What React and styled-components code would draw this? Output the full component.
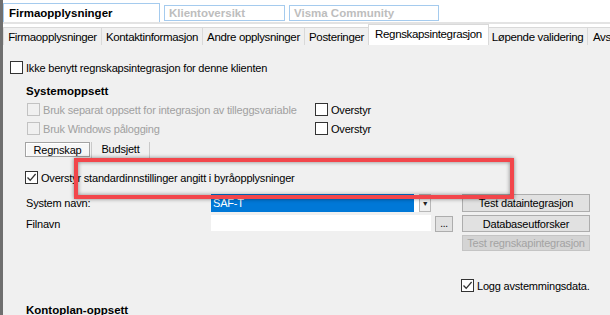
import React from "react";
import styled, { createGlobalStyle } from "styled-components";

const GlobalStyle = createGlobalStyle`
  html, body {
    margin: 0;
    padding: 0;
    width: 610px;
    height: 315px;
    overflow: hidden;
    background: #f0f0f0;
  }
  * {
    box-sizing: border-box;
  }
`;

const FONT = `"Liberation Sans", Arial, sans-serif`;

const Frame = styled.div`
  position: relative;
  width: 610px;
  height: 315px;
  overflow: hidden;
  border-left: 3px solid #6f6f6f;
  font-family: ${FONT};
  font-size: 11px;
  letter-spacing: -0.2px;
  color: #000;
  display: flex;
  flex-direction: column;
  background: #f0f0f0;
`;

const TopBar = styled.div`
  height: 22px;
  background: #fff;
  display: flex;
  align-items: flex-end;
  gap: 4px;
  flex-shrink: 0;
`;

const TopTab = styled.div`
  width: ${(p) => p.$w}px;
  height: ${(p) => (p.$active ? 19 : 16)}px;
  margin-bottom: ${(p) => (p.$active ? 0 : 1)}px;
  border: 1px solid #a5cbee;
  border-bottom: ${(p) => (p.$active ? "none" : "1px solid #a5cbee")};
  padding-left: ${(p) => (p.$active ? 5 : 4)}px;
  font-weight: bold;
  font-size: 11.5px;
  letter-spacing: 0;
  color: ${(p) => (p.$active ? "#000" : "#bdbdbd")};
  display: flex;
  align-items: center;
  white-space: nowrap;
  overflow: hidden;
`;

const TabStrip = styled.div`
  height: 23px;
  background: #fff;
  border-top: 2px solid #e3e3e3;
  display: flex;
  align-items: flex-end;
  flex-shrink: 0;
  overflow: hidden;
`;

const Tab = styled.div`
  width: ${(p) => p.$w}px;
  flex-shrink: 0;
  height: ${(p) => (p.$active ? 21 : 18)}px;
  margin-left: ${(p) => (p.$first ? 0 : -1)}px;
  margin-right: ${(p) => (p.$active ? -1 : 0)}px;
  position: relative;
  z-index: ${(p) => (p.$active ? 1 : 0)};
  background: ${(p) => (p.$active ? "#fff" : "#f0f0f0")};
  border: 1px solid #d9d9d9;
  border-bottom: none;
  display: flex;
  align-items: center;
  justify-content: ${(p) => (p.$last ? "flex-start" : "center")};
  padding-left: ${(p) => (p.$last ? 5 : 0)}px;
  white-space: nowrap;
  letter-spacing: -0.35px;
  font-size: 11.5px;
  padding-bottom: ${(p) => (p.$active ? 2 : 0)}px;
`;

const Content = styled.div`
  flex: 1;
  padding: 16px 0 0 7px;
  display: flex;
  flex-direction: column;
`;

const Row = styled.div`
  display: flex;
  align-items: center;
  height: 13px;
  margin-left: ${(p) => p.$indent || 0}px;
  margin-top: ${(p) => p.$top || 0}px;
`;

const Option = styled.label`
  display: flex;
  align-items: center;
  gap: 3px;
  width: ${(p) => (p.$w ? `${p.$w}px` : "auto")};
  color: ${(p) => (p.$disabled ? "#a0a0a0" : "#000")};
  white-space: nowrap;
`;

const Box = styled.span`
  width: 13px;
  height: 13px;
  flex-shrink: 0;
  border: 1px solid ${(p) => (p.$disabled ? "#c2c2c2" : "#333")};
  background: ${(p) => (p.$disabled ? "#f0f0f0" : "#fff")};
  display: flex;
  align-items: center;
  justify-content: center;
`;

const Title = styled.div`
  font-weight: bold;
  font-size: 11.5px;
  letter-spacing: 0;
  line-height: 13px;
  margin-left: ${(p) => p.$indent || 0}px;
  margin-top: ${(p) => p.$top || 0}px;
`;

const SubTabs = styled.div`
  display: flex;
  height: 20px;
  margin: 7px 0 0 15px;
`;

const SubTab = styled.div`
  width: ${(p) => p.$w}px;
  height: ${(p) => (p.$active ? 15 : 20)}px;
  display: flex;
  align-items: center;
  justify-content: center;
  padding-top: ${(p) => (p.$active ? 1 : 0)}px;
  border: ${(p) => (p.$active ? "1px solid #a3a3a3" : "none")};
  border-left: 1px solid ${(p) => (p.$active ? "#a3a3a3" : "#c9c9c9")};
  border-right: 1px solid ${(p) => (p.$active ? "#a3a3a3" : "#c9c9c9")};
  box-shadow: ${(p) => (p.$active ? "inset 1px 1px 0 #fff" : "none")};
  background: ${(p) => (p.$active ? "#f7f7f7" : "transparent")};
  margin-left: ${(p) => (p.$active ? 0 : 1)}px;
  align-self: flex-start;
  padding-bottom: ${(p) => (p.$active ? 0 : 6)}px;
`;

const Form = styled.div`
  display: grid;
  grid-template-columns: 185px 220px 31px 128px;
  grid-template-rows: 18px 17px 16px;
  row-gap: 3px;
  margin: 10px 0 0 16px;
  align-items: stretch;
`;

const Label = styled.div`
  display: flex;
  align-items: center;
`;

const Combo = styled.div`
  display: flex;
  background: #fff;
  gap: 5px;
`;

const Selected = styled.div`
  flex: 1;
  background: #0078d7;
  color: #fff;
  padding-left: 2px;
  display: flex;
  align-items: center;
`;

const DropButton = styled.div`
  width: 12px;
  background: #f0f0f0;
  border: 1px solid #b8b8b8;
  display: flex;
  align-items: center;
  justify-content: center;
  font-size: 7px;
  color: #222;
`;

const Input = styled.div`
  background: #fff;
  height: 16px;
`;

const SmallButton = styled.div`
  width: 18px;
  height: 16px;
  margin-left: 4px;
  margin-top: 1px;
  background: #e1e1e1;
  border: 1px solid #adadad;
  display: flex;
  align-items: flex-end;
  justify-content: center;
  padding-bottom: 2px;
  font-size: 10px;
`;

const Button = styled.div`
  grid-column: 4;
  background: ${(p) => (p.$disabled ? "#d4d4d4" : "#e1e1e1")};
  border: 1px solid ${(p) => (p.$disabled ? "#c4c4c4" : "#adadad")};
  color: ${(p) => (p.$disabled ? "#a3a3a3" : "#000")};
  display: flex;
  align-items: center;
  justify-content: center;
  white-space: nowrap;
`;

const LogRow = styled(Row)`
  margin-left: 451px;
  margin-top: 28px;
`;

const Annotation = styled.div`
  position: absolute;
  left: 71px;
  top: 158px;
  width: 440px;
  height: 41px;
  border: 4px solid #f2464b;
  box-shadow: 0 0 4px rgba(0, 0, 0, 0.45), inset 0 0 4px rgba(0, 0, 0, 0.45);
  pointer-events: none;
`;

const Check = () => (
  <svg width="11" height="11" viewBox="0 0 11 11">
    <path d="M1.5 5.5 L4.2 8.3 L9.6 2" fill="none" stroke="#333" strokeWidth="1.3" />
  </svg>
);

const CheckBox = ({ checked, disabled, children, w }) => (
  <Option $disabled={disabled} $w={w}>
    <Box $disabled={disabled}>{checked && <Check />}</Box>
    {children}
  </Option>
);

const tabs = [
  ["Firmaopplysninger", 99],
  ["Kontaktinformasjon", 102],
  ["Andre opplysninger", 103],
  ["Posteringer", 65],
  ["Regnskapsintegrasjon", 121, true],
  ["Løpende validering", 101],
  ["Avs", 40],
];

export default function App() {
  return (
    <>
      <GlobalStyle />
      <Frame>
        <TopBar>
          <TopTab $active $w={157}>Firmaopplysninger</TopTab>
          <TopTab $w={121}>Klientoversikt</TopTab>
          <TopTab $w={150}>Visma Community</TopTab>
        </TopBar>
        <TabStrip>
          {tabs.map(([label, w, active], i) => (
            <Tab key={label} $w={w} $active={active} $first={i === 0} $last={i === tabs.length - 1}>
              {label}
            </Tab>
          ))}
        </TabStrip>
        <Content>
          <Row>
            <CheckBox>Ikke benytt regnskapsintegrasjon for denne klienten</CheckBox>
          </Row>
          <Title $indent={16} $top={11}>Systemoppsett</Title>
          <Row $indent={17} $top={5}>
            <CheckBox disabled w={288}>Bruk separat oppsett for integrasjon av tilleggsvariable</CheckBox>
            <CheckBox>Overstyr</CheckBox>
          </Row>
          <Row $indent={17} $top={6}>
            <CheckBox disabled w={288}>Bruk Windows pålogging</CheckBox>
            <CheckBox>Overstyr</CheckBox>
          </Row>
          <SubTabs>
            <SubTab $active $w={65}>Regnskap</SubTab>
            <SubTab $w={59}>Budsjett</SubTab>
          </SubTabs>
          <Row $indent={15} $top={9}>
            <CheckBox checked>Overstyr standardinnstillinger angitt i byråopplysninger</CheckBox>
          </Row>
          <Form>
            <Label>System navn:</Label>
            <Combo>
              <Selected>SAF-T</Selected>
              <DropButton>▼</DropButton>
            </Combo>
            <span />
            <Button>Test dataintegrasjon</Button>
            <Label>Filnavn</Label>
            <Input />
            <SmallButton>...</SmallButton>
            <Button>Databaseutforsker</Button>
            <Button $disabled>Test regnskapintegrasjon</Button>
          </Form>
          <LogRow>
            <CheckBox checked>Logg avstemmingsdata.</CheckBox>
          </LogRow>
          <Title $indent={16} $top={12}>Kontoplan-oppsett</Title>
        </Content>
        <Annotation />
      </Frame>
    </>
  );
}
